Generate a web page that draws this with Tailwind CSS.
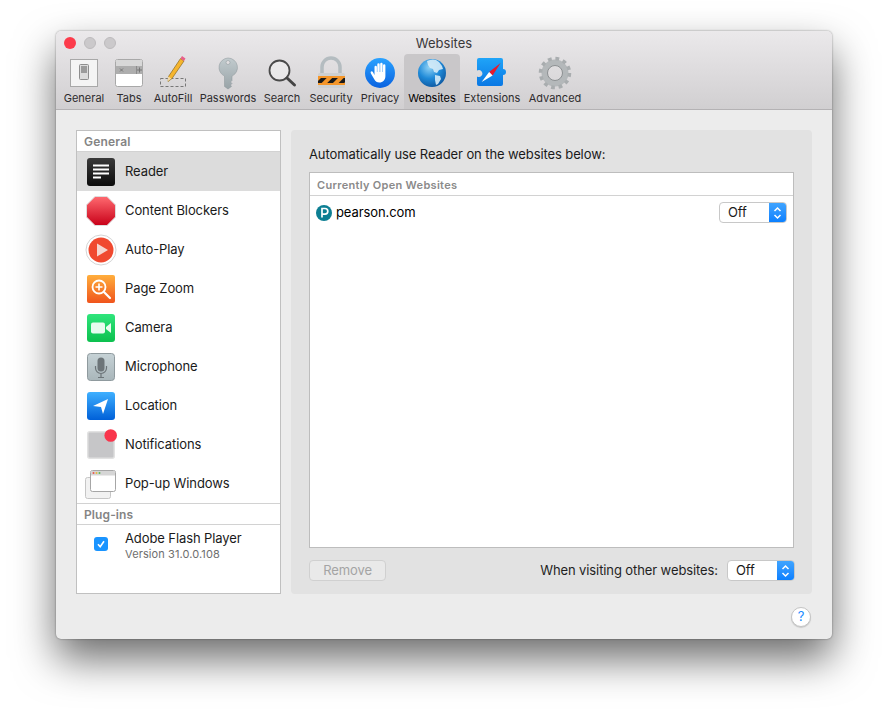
<!DOCTYPE html>
<html lang="en">
  <head>
    <meta charset="UTF-8" />
    <title>Websites</title>
    <script src="https://cdn.jsdelivr.net/npm/@tailwindcss/browser@4"></script>
  </head>
  <body class="bg-white font-['Inter','Liberation_Sans',sans-serif] text-[13px] tracking-[-0.1px] text-[#1a1a1a] overflow-hidden h-[719px]">
    <svg class="absolute w-0 h-0">
      <defs>
        <linearGradient id="blue" x1="0" y1="0" x2="0" y2="1"><stop offset="0" stop-color="#3fb0ff"/><stop offset="1" stop-color="#0060d8"/></linearGradient>
        <linearGradient id="puzzle" x1="0" y1="0" x2="0" y2="1"><stop offset="0" stop-color="#1fa4f8"/><stop offset="1" stop-color="#0a78e4"/></linearGradient>
        <linearGradient id="red" x1="0" y1="0" x2="0" y2="1"><stop offset="0" stop-color="#ff6a70"/><stop offset="1" stop-color="#c80018"/></linearGradient>
        <linearGradient id="orange" x1="0" y1="0" x2="0" y2="1"><stop offset="0" stop-color="#ffae3c"/><stop offset="1" stop-color="#f0541c"/></linearGradient>
        <linearGradient id="green" x1="0" y1="0" x2="0" y2="1"><stop offset="0" stop-color="#2fe57c"/><stop offset="1" stop-color="#0cc04e"/></linearGradient>
        <linearGradient id="black" x1="0" y1="0" x2="0" y2="1"><stop offset="0" stop-color="#3a3a3a"/><stop offset="1" stop-color="#0c0c0c"/></linearGradient>
        <linearGradient id="mic" x1="0" y1="0" x2="0" y2="1"><stop offset="0" stop-color="#c6d2d6"/><stop offset="1" stop-color="#a9b6ba"/></linearGradient>
        <linearGradient id="silver" x1="0" y1="0" x2="0" y2="1"><stop offset="0" stop-color="#c2cbce"/><stop offset="1" stop-color="#98a3a7"/></linearGradient>
        <linearGradient id="privacy" x1="0" y1="0" x2="0" y2="1"><stop offset="0" stop-color="#2aa2ff"/><stop offset="1" stop-color="#0a62e0"/></linearGradient>
        <radialGradient id="globe" cx="0.4" cy="0.3" r="0.8"><stop offset="0" stop-color="#8fd2f6"/><stop offset="0.5" stop-color="#1f8ad8"/><stop offset="1" stop-color="#0b4f96"/></radialGradient>
        <pattern id="stripes" width="8" height="8" patternUnits="userSpaceOnUse" patternTransform="rotate(45)"><rect width="8" height="8" fill="#f5962a"/><rect width="4" height="8" fill="#1a1a1a"/></pattern>
      </defs>
    </svg>

    <div class="ml-[56px] mt-[31px] w-[776px] h-[608px] flex flex-col rounded-[5px] bg-[#ececec] shadow-[0_20px_42px_rgba(0,0,0,0.58),0_0_2px_rgba(0,0,0,0.45)]">
      <!-- title bar + toolbar -->
      <div class="h-[79px] shrink-0 flex flex-col rounded-t-[5px] bg-gradient-to-b from-[#ebe9eb] to-[#d1cfd1] border-b border-[#b4b2b4] tracking-normal">
        <div class="h-[23px] pt-[1px] flex items-center relative">
          <div class="flex gap-[8px] pl-[8px]">
            <span class="w-[12px] h-[12px] rounded-full bg-[#fc3b4b]"></span>
            <span class="w-[12px] h-[12px] rounded-full bg-[#cbc9cb] border border-[#bdbbbd]"></span>
            <span class="w-[12px] h-[12px] rounded-full bg-[#cbc9cb] border border-[#bdbbbd]"></span>
          </div>
          <span class="absolute inset-x-0 top-[4px] text-center text-[13px] leading-[16px] text-[#3a383a]">Websites</span>
        </div>
        <div class="flex pl-[4px] h-[55px] text-[11px] text-[#2e2c2e]">
          <div class="w-[48px] flex flex-col items-center">
            <svg class="w-[40px] h-[36px]" viewBox="0 0 40 36"><rect x="6.500" y="5.500" width="27" height="27" fill="#f4f4f4" stroke="#a8a8a8"/><rect x="15.500" y="10.500" width="9" height="15" rx="1" fill="#dcdcdc" stroke="#8e8e8e"/><rect x="17" y="12" width="6" height="7" fill="#9b9b9b"/></svg>
            <span class="leading-[16px]">General</span>
          </div>
          <div class="w-[42px] flex flex-col items-center">
            <svg class="w-[40px] h-[36px]" viewBox="0 0 40 36"><rect x="6.500" y="5.500" width="27" height="27" rx="2" fill="#fff" stroke="#a8a8a8"/><rect x="7" y="6" width="26" height="6" fill="#d8d8d8"/><rect x="7" y="12" width="26" height="8" fill="#aeaeae"/><line x1="27.500" y1="12" x2="27.500" y2="20" stroke="#8c8c8c"/><path d="M11 14.500l3 3m0-3l-3 3M30.500 13.500v5m-2.500-2.500h5" stroke="#777" fill="none"/></svg>
            <span class="leading-[16px]">Tabs</span>
          </div>
          <div class="w-[46px] flex flex-col items-center">
            <svg class="w-[40px] h-[36px]" viewBox="0 0 40 36"><rect x="7.500" y="24.500" width="25" height="8" fill="none" stroke="#777" stroke-dasharray="3 2"/><path d="M27.500 4.500l3.500 2.500-12 17.500-4 3 0.500-5z" fill="#f5b52e" stroke="#7a5a10" stroke-width="0.6"/><path d="M27.500 4.500l1.500-2.500 3.500 2.500-1.500 2.500z" fill="#e8608a"/><path d="M15 22.500l-0.500 5 4-3z" fill="#f0d8a8"/></svg>
            <span class="leading-[16px]">AutoFill</span>
          </div>
          <div class="w-[64px] flex flex-col items-center">
            <svg class="w-[40px] h-[36px]" viewBox="0 0 40 36"><path fill-rule="evenodd" d="M20 4a9.500 9.500 0 0 1 4 18.100v4.400l-1.500 1.500 1.500 1.500-1.500 1.500 1 1.500-3.500 2.500-3.500-2.500v-10.400a9.500 9.500 0 0 1 3.500-18.100zm0 2.500a2 2 0 1 0 0 4 2 2 0 0 0 0-4z" fill="url(#silver)" stroke="#8a9599" stroke-width="0.5"/></svg>
            <span class="leading-[16px]">Passwords</span>
          </div>
          <div class="w-[44px] flex flex-col items-center">
            <svg class="w-[40px] h-[36px]" viewBox="0 0 40 36"><circle cx="17.500" cy="16.500" r="10" fill="#f2f2f2" fill-opacity="0.6" stroke="#4a4a4a" stroke-width="1.800"/><line x1="25" y1="24" x2="32.500" y2="31" stroke="#444" stroke-width="3" stroke-linecap="round"/></svg>
            <span class="leading-[16px]">Search</span>
          </div>
          <div class="w-[54px] flex flex-col items-center">
            <svg class="w-[40px] h-[36px]" viewBox="0 0 40 36"><path d="M11 20v-7a9 9 0 0 1 18 0v7" fill="none" stroke="#b4bcc0" stroke-width="3.500"/><rect x="7" y="19" width="27" height="15" rx="1.500" fill="#cdd0d2"/><rect x="7" y="22" width="27" height="9" fill="#f5962a"/><rect x="7" y="24" width="27" height="5" fill="url(#stripes)"/></svg>
            <span class="leading-[16px]">Security</span>
          </div>
          <div class="w-[44px] flex flex-col items-center">
            <svg class="w-[40px] h-[36px]" viewBox="0 0 40 36"><circle cx="20" cy="19" r="15" fill="url(#privacy)"/><path d="M14.500 21v-8a1.200 1.200 0 0 1 2.400 0v5h.4v-7.500a1.200 1.200 0 0 1 2.400 0v7.500h.5v-8a1.200 1.200 0 0 1 2.400 0v8h.4v-6.500a1.200 1.200 0 0 1 2.400 0v10.500c0 4-2.500 6.500-6 6.500-2.500 0-4-1-5-3l-3.500-6c-1-2 1-2.800 2-1.500z" fill="#fff"/></svg>
            <span class="leading-[16px]">Privacy</span>
          </div>
          <div class="w-[56px] ml-[2px] flex flex-col items-center bg-[#c9c7c9] rounded-t-[4px]">
            <svg class="w-[40px] h-[36px]" viewBox="0 0 40 36"><circle cx="20" cy="19" r="14" fill="url(#globe)"/><path d="M15 7c3-1.500 6-2 9-1l3 2 3 4 1 3-4 1-2 3-3-1-1-3-3-1-2-3zM23 21l5 1 1 3-3 5-2 1-1-5z" fill="#d6ecf8" fill-opacity="0.9"/></svg>
            <span class="leading-[16px] text-black">Websites</span>
          </div>
          <div class="w-[64px] flex flex-col items-center">
            <svg class="w-[40px] h-[36px]" viewBox="0 0 40 36"><path d="M5 6a2 2 0 0 1 2-2h22a2 2 0 0 1 2 2v9a3 3 0 1 1 0 6v9a2 2 0 0 1-2 2h-22a2 2 0 0 1-2-2v-7.500a3.500 3.500 0 1 0 0-6z" fill="url(#puzzle)"/><path d="M28.600 9l-11.500 9 3.500 3.500z" fill="#e8192c"/><path d="M9.600 28l7.500-10 3.500 3.500z" fill="#fff"/></svg>
            <span class="leading-[16px]">Extensions</span>
          </div>
          <div class="w-[62px] flex flex-col items-center">
            <svg class="w-[40px] h-[36px]" viewBox="0 0 40 36"><circle cx="20" cy="19" r="10.500" fill="none" stroke="#b4b8ba" stroke-width="6"/><circle cx="20" cy="19" r="14.500" fill="none" stroke="#a9adaf" stroke-width="3.500" stroke-dasharray="3.800 3.790"/><circle cx="20" cy="19" r="7.500" fill="none" stroke="#8c9092" stroke-width="1"/></svg>
            <span class="leading-[16px]">Advanced</span>
          </div>
        </div>
      </div>

      <!-- content -->
      <div class="flex gap-[10px] pt-[20px] px-[20px] h-[485px] shrink-0">
        <!-- sidebar -->
        <div class="w-[205px] h-[464px] flex flex-col bg-white border border-[#c0c0c0]">
          <div class="h-[21px] pl-[7px] pt-[2px] flex items-center border-b border-[#d2d2d2] text-[12px] tracking-[0.2px] font-semibold text-[#848484]">General</div>
          <div class="h-[39px] flex items-center gap-[8px] pl-[8px] bg-[#dcdcdc]">
            <svg class="w-[32px] h-[32px]" viewBox="0 0 32 32"><rect x="2" y="2" width="28" height="28" rx="3" fill="url(#black)"/><path d="M8 9.500h16M8 13.500h16M8 17.500h16M8 21.500h8" stroke="#fff" stroke-width="2"/></svg>
            <span>Reader</span>
          </div>
          <div class="h-[39px] flex items-center gap-[8px] pl-[8px]">
            <svg class="w-[32px] h-[32px]" viewBox="0 0 32 32"><path d="M10 1.500h12l8.500 8.500v12l-8.500 8.500h-12l-8.500-8.500v-12z" fill="url(#red)" stroke="#ddd"/></svg>
            <span>Content Blockers</span>
          </div>
          <div class="h-[39px] flex items-center gap-[8px] pl-[8px]">
            <svg class="w-[32px] h-[32px]" viewBox="0 0 32 32"><circle cx="16" cy="16" r="15" fill="#fff" stroke="#d4d4d4"/><circle cx="16" cy="16" r="12.500" fill="#f0492f"/><path d="M12 9.500l11 6.500-11 6.500z" fill="#f5d6cf"/></svg>
            <span>Auto-Play</span>
          </div>
          <div class="h-[39px] flex items-center gap-[8px] pl-[8px]">
            <svg class="w-[32px] h-[32px]" viewBox="0 0 32 32"><rect x="2" y="2" width="28" height="28" rx="2" fill="url(#orange)"/><circle cx="14" cy="14" r="6.500" fill="none" stroke="#fff" stroke-width="1.800"/><path d="M10.500 14h7M14 10.500v7" stroke="#fff" stroke-width="1.600"/><path d="M19 19l6 6" stroke="#fff" stroke-width="2.200" stroke-linecap="round"/></svg>
            <span>Page Zoom</span>
          </div>
          <div class="h-[39px] flex items-center gap-[8px] pl-[8px]">
            <svg class="w-[32px] h-[32px]" viewBox="0 0 32 32"><rect x="2" y="2" width="28" height="28" rx="3" fill="url(#green)"/><rect x="6" y="10.500" width="14" height="11" rx="2" fill="#e8fbef"/><path d="M21 15l5-4v10l-5-4z" fill="#e8fbef"/></svg>
            <span>Camera</span>
          </div>
          <div class="h-[39px] flex items-center gap-[8px] pl-[8px]">
            <svg class="w-[32px] h-[32px]" viewBox="0 0 32 32"><rect x="2.500" y="2.500" width="27" height="27" rx="3" fill="url(#mic)" stroke="#8f9a9e"/><rect x="12.500" y="6.500" width="7" height="14" rx="3.500" fill="#6c7478"/><path d="M10.500 15v2a5.500 5.500 0 0 0 11 0v-2M16 22.500v3.500M13 26.500h6" fill="none" stroke="#6c7478" stroke-width="1.200"/></svg>
            <span>Microphone</span>
          </div>
          <div class="h-[39px] flex items-center gap-[8px] pl-[8px]">
            <svg class="w-[32px] h-[32px]" viewBox="0 0 32 32"><rect x="2" y="2" width="28" height="28" rx="3" fill="url(#blue)"/><path d="M8 16l15-7-5 15-2-7z" fill="#fff"/></svg>
            <span>Location</span>
          </div>
          <div class="h-[39px] flex items-center gap-[8px] pl-[8px]">
            <svg class="w-[32px] h-[32px]" viewBox="0 0 32 32"><rect x="2.750" y="2.750" width="26.500" height="26.500" rx="2" fill="#c6c6c8" stroke="#e2e2e2" stroke-width="1.500"/><circle cx="25.700" cy="6.500" r="6.300" fill="#f9354c"/></svg>
            <span>Notifications</span>
          </div>
          <div class="h-[39px] flex items-center gap-[8px] pl-[8px]">
            <svg class="w-[32px] h-[32px]" viewBox="0 0 32 32"><rect x="0.500" y="9.500" width="25" height="21" rx="2" fill="#f2f2f2" stroke="#c6c6c6"/><rect x="5.500" y="2.500" width="25" height="21" rx="2" fill="#fff" stroke="#a6a6a6"/><rect x="6" y="3" width="24" height="4.500" fill="#d6d6d6"/><circle cx="8.500" cy="5" r="1" fill="#e9594f"/><circle cx="11.500" cy="5" r="1" fill="#e9b83d"/><circle cx="14.500" cy="5" r="1" fill="#5cb85c"/></svg>
            <span>Pop-up Windows</span>
          </div>
          <div class="h-[22px] pl-[7px] pt-[2px] flex items-center border-y border-[#d2d2d2] text-[12px] tracking-[0.1px] font-semibold text-[#848484]">Plug-ins</div>
          <div class="flex pt-[5px] pl-[17px]">
            <span class="mt-[7px] w-[14px] h-[14px] rounded-[3px] bg-[#1a94ff] flex items-center justify-center">
              <svg class="w-[10px] h-[10px]" viewBox="0 0 10 10"><path d="M2 5.200l2.200 2.500 3.800-5.400" fill="none" stroke="#fff" stroke-width="1.600"/></svg>
            </span>
            <div class="ml-[17px] flex flex-col">
              <span class="leading-[16px]">Adobe Flash Player</span>
              <span class="mt-[1px] text-[11px] leading-[15px] tracking-[0.1px] text-[#6e6e6e]">Version 31.0.0.108</span>
            </div>
          </div>
        </div>

        <!-- right panel -->
        <div class="w-[521px] h-[464px] flex flex-col rounded-[4px] bg-[#e2e2e2] px-[18px]">
          <div class="h-[42px] pt-[16px] leading-[17px] text-[#1a1a1a]">Automatically use Reader on the websites below:</div>
          <div class="h-[376px] w-[485px] flex flex-col bg-white border border-[#bdbdbd]">
            <div class="h-[23px] shrink-0 pl-[7px] pt-[2px] flex items-center border-b border-[#d2d2d2] text-[11px] tracking-[0.3px] font-semibold text-[#8a8a8a]">Currently Open Websites</div>
            <div class="h-[33px] flex items-center pl-[6px] pr-[6px]">
              <svg class="w-[16px] h-[16px]" viewBox="0 0 16 16"><circle cx="8" cy="8" r="8" fill="#0d7f93"/><path d="M6 12.500v-9h3a2.800 2.800 0 0 1 0 5.600h-3" fill="none" stroke="#fff" stroke-width="1.700"/></svg>
              <span class="ml-[4px] text-black">pearson.com</span>
              <div class="ml-auto w-[68px] h-[21px] flex rounded-[4px] bg-white border border-[#c8c8c8] overflow-hidden">
                <span class="flex-1 pl-[8px] leading-[19px] text-[#1a1a1a]">Off</span>
                <span class="w-[17px] bg-gradient-to-b from-[#3fa4ff] to-[#0a80ff] flex items-center justify-center">
                  <svg class="w-[9px] h-[14px]" viewBox="0 0 9 14"><path d="M1.500 5l3-3 3 3M1.500 9l3 3 3-3" fill="none" stroke="#fff" stroke-width="1.500"/></svg>
                </span>
              </div>
            </div>
          </div>
          <div class="flex items-center pt-[12px]">
            <button class="w-[77px] h-[21px] rounded-[4px] bg-[#e9e9e9] border border-[#d0d0d0] text-[#a4a4a4]">Remove</button>
            <span class="ml-auto text-[#1f1f1f]">When visiting other websites:</span>
            <div class="ml-[9px] -mr-[1px] w-[68px] h-[21px] flex rounded-[4px] bg-white border border-[#c8c8c8] overflow-hidden">
              <span class="flex-1 pl-[8px] leading-[19px] text-[#1a1a1a]">Off</span>
              <span class="w-[17px] bg-gradient-to-b from-[#3fa4ff] to-[#0a80ff] flex items-center justify-center">
                <svg class="w-[9px] h-[14px]" viewBox="0 0 9 14"><path d="M1.500 5l3-3 3 3M1.500 9l3 3 3-3" fill="none" stroke="#fff" stroke-width="1.500"/></svg>
              </span>
            </div>
          </div>
        </div>
      </div>

      <!-- help -->
      <div class="flex justify-end pr-[21px] pt-[12px]">
        <span class="w-[20px] h-[20px] rounded-full bg-white border border-[#c4c4c4] flex items-center justify-center text-[13px] text-[#1a8cff] shadow-[0_1px_1px_rgba(0,0,0,0.15)]">?</span>
      </div>
    </div>
  </body>
</html>
